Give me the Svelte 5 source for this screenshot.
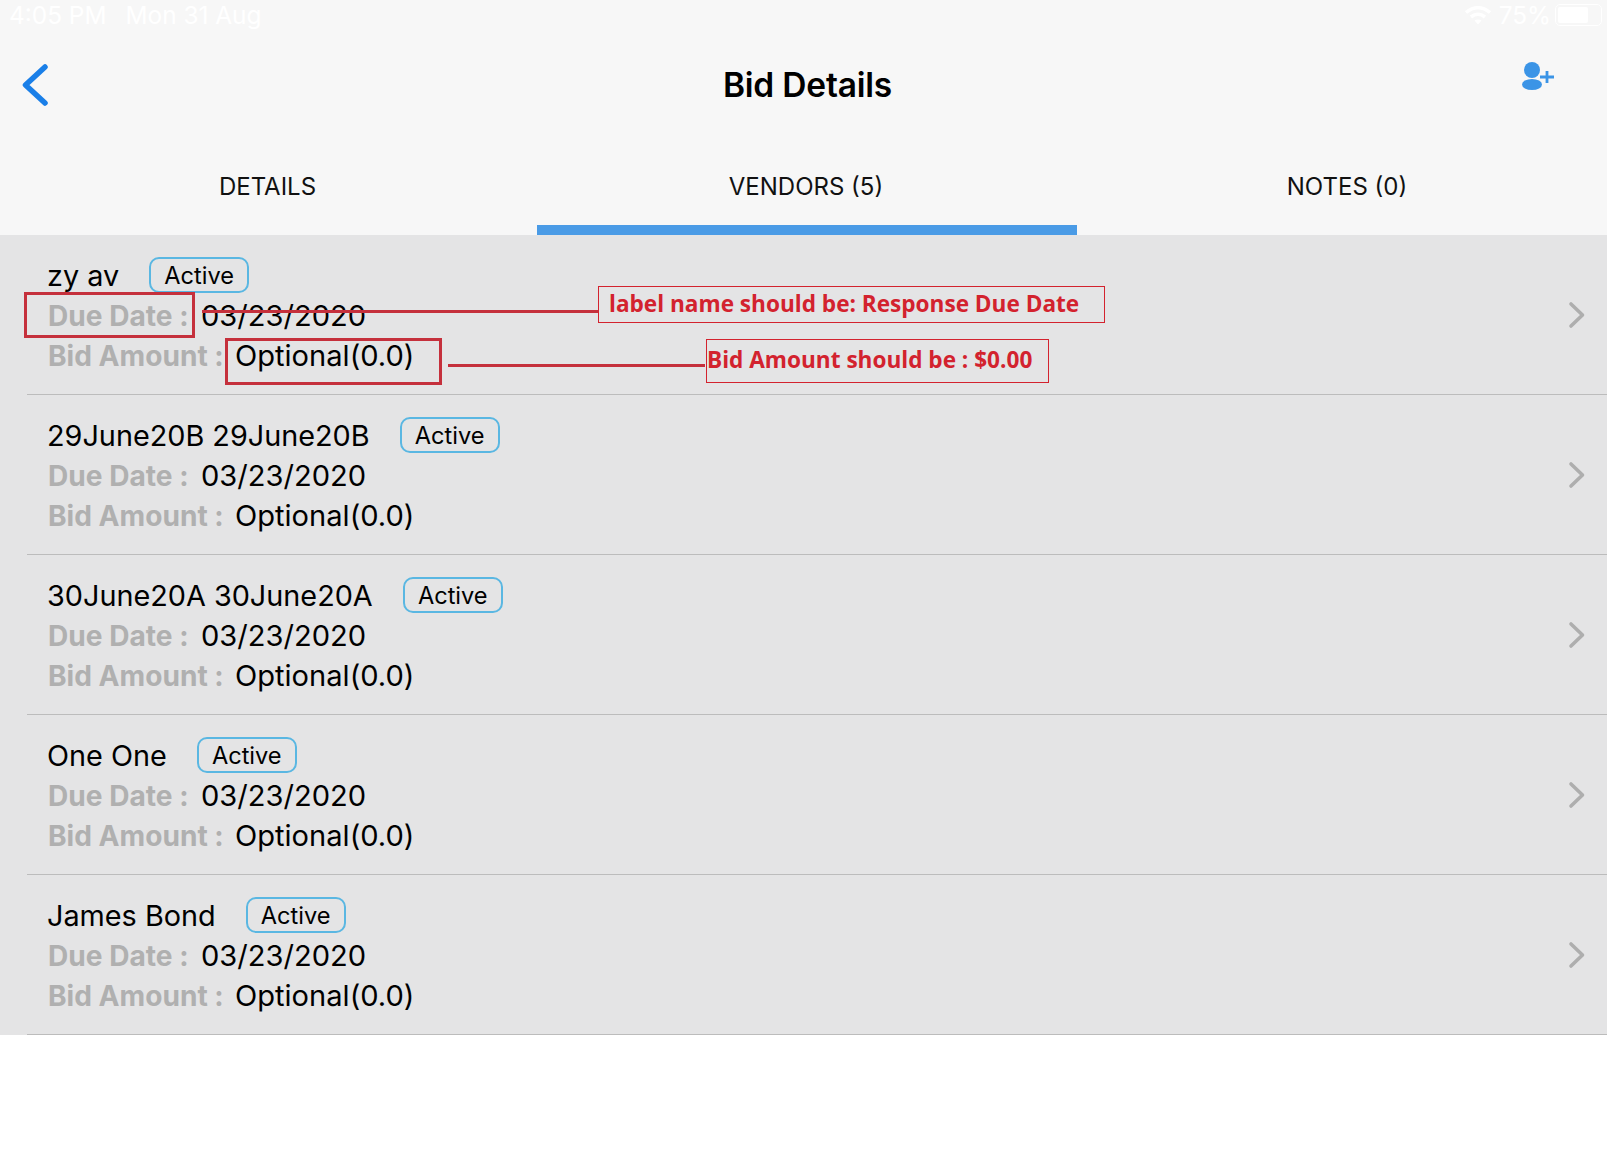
<script lang="ts">
  // Vendor rows for the Bid Details screen
  const vendors = [
    { name: 'zy av', dueDate: '03/23/2020', amount: 'Optional(0.0)' },
    { name: '29June20B 29June20B', dueDate: '03/23/2020', amount: 'Optional(0.0)' },
    { name: '30June20A 30June20A', dueDate: '03/23/2020', amount: 'Optional(0.0)' },
    { name: 'One One', dueDate: '03/23/2020', amount: 'Optional(0.0)' },
    { name: 'James Bond', dueDate: '03/23/2020', amount: 'Optional(0.0)' }
  ];

  const tabs = ['DETAILS', 'VENDORS (5)', 'NOTES (0)'];
  const activeTab = 1;
</script>

<div class="screen">
  <header class="top">
    <div class="status">
      <div class="status-left">
        <span>4:05 PM</span>
        <span>Mon 31 Aug</span>
      </div>
      <div class="status-right">
        <svg width="28" height="20" viewBox="0 0 28 20" aria-hidden="true">
          <path d="M2 7.5C9.5 1 18.5 1 26 7.5" class="wifi" />
          <path d="M7 12C11.500 8.500 16.500 8.500 21 12" class="wifi" />
          <path d="M14 19.500 10.500 15.500C12.500 14 15.500 14 17.500 15.500Z" fill="#fff" />
        </svg>
        <span>75%</span>
        <div class="battery"><div class="battery-fill"></div></div>
      </div>
    </div>

    <nav class="navbar">
      <button type="button" class="icon-btn" aria-label="Back">
        <svg width="28" height="44" viewBox="0 0 28 44">
          <path d="M23 4 3.500 22 23 40" fill="none" stroke="#1a7fe8" stroke-width="5.500" stroke-linecap="round" stroke-linejoin="round" />
        </svg>
      </button>
      <h1>Bid Details</h1>
      <button type="button" class="icon-btn add" aria-label="Add vendor">
        <svg width="34" height="30" viewBox="0 0 34 30">
          <circle cx="11" cy="10" r="8" fill="#3b94e6" />
          <ellipse cx="11" cy="24.500" rx="10" ry="5.500" fill="#3b94e6" />
          <path d="M19 17H33M26 11V23" stroke="#3b94e6" stroke-width="2.800" fill="none" />
        </svg>
      </button>
    </nav>

    <div class="tabs">
      {#each tabs as tab, i}
        <div class="tab" class:active={i === activeTab}>{tab}</div>
      {/each}
    </div>
  </header>

  <main class="list">
    {#each vendors as vendor}
      <div class="row">
        <div class="row-body">
          <div class="line name-line">
            <span class="name">{vendor.name}</span>
            <span class="badge">Active</span>
          </div>
          <div class="line">
            <span class="label due">Due Date :</span>
            <span class="value">{vendor.dueDate}</span>
          </div>
          <div class="line">
            <span class="label bid">Bid Amount :</span>
            <span class="value">{vendor.amount}</span>
          </div>
        </div>
        <svg class="chevron" width="18" height="28" viewBox="0 0 18 28" aria-hidden="true">
          <path d="M3 3 14.500 14 3 25" fill="none" stroke="#aeaeae" stroke-width="3.600" stroke-linecap="round" stroke-linejoin="round" />
        </svg>
      </div>
    {/each}
  </main>

  <!-- review markup drawn over the screenshot -->
  <div class="mark box-due"></div>
  <div class="mark box-amount"></div>
  <div class="mark line-due"></div>
  <div class="mark line-amount"></div>
  <div class="note note-due">label name should be: Response Due Date</div>
  <div class="note note-amount">Bid Amount should be : $0.00</div>
</div>

<style>
  :global(body) {
    background: #fff;
  }

  .screen {
    position: relative;
    width: 1607px;
    height: 1157px;
    overflow: hidden;
    font-family: Inter, "Liberation Sans", sans-serif;
    color: #000;
  }

  .top {
    background: #f7f7f7;
    height: 235px;
    display: flex;
    flex-direction: column;
  }

  .status {
    height: 30px;
    display: flex;
    justify-content: space-between;
    align-items: center;
    color: #fff;
    font-size: 24.400px;
    padding-left: 9px;
  }

  .status-left {
    display: flex;
    gap: 19px;
  }

  .status-right {
    display: flex;
    align-items: center;
    gap: 7px;
    margin-right: 5px;
  }

  .status-right span {
    margin-right: -3px;
  }

  .wifi {
    fill: none;
    stroke: #fff;
    stroke-width: 3.500;
  }

  .battery {
    width: 47px;
    height: 22px;
    border: 1px solid #fff;
    border-radius: 5px;
    padding: 2px;
    box-sizing: border-box;
  }

  .battery-fill {
    width: 72%;
    height: 100%;
    background: #fff;
    border-radius: 2px;
  }

  .navbar {
    height: 110px;
    display: flex;
    align-items: center;
    justify-content: space-between;
    padding: 0 52px 0 22px;
    position: relative;
  }

  .navbar h1 {
    position: absolute;
    left: 8px;
    right: 0;
    top: 0;
    bottom: 0;
    margin: 0;
    display: flex;
    align-items: center;
    justify-content: center;
    font-size: 33.500px;
    font-weight: 600;
    letter-spacing: -0.2px;
  }

  .icon-btn {
    background: none;
    border: none;
    padding: 0;
    display: flex;
    z-index: 1;
  }

  .icon-btn.add {
    margin-bottom: 20px;
  }

  .tabs {
    flex: 1;
    display: grid;
    grid-template-columns: 535px 542px 540px;
  }

  .tab {
    display: flex;
    align-items: center;
    justify-content: center;
    font-size: 24px;
    padding-bottom: 2px;
    color: #111;
  }

  .tab.active {
    box-shadow: inset 0 -10px 0 #4a9be6;
    margin-left: 2px;
    padding-right: 2px;
  }

  .list {
    background: #e4e4e5;
  }

  .row {
    height: 160px;
    box-sizing: border-box;
    margin-left: 27px;
    padding: 20px 21px 0 20px;
    border-bottom: 1px solid #bcbcbc;
    display: flex;
    justify-content: space-between;
    align-items: flex-start;
  }

  .line {
    height: 40px;
    display: flex;
    align-items: center;
    font-size: 29.100px;
  }

  .name-line {
    gap: 30px;
  }

  .name {
    font-size: 28.800px;
  }

  .badge {
    font-size: 23.600px;
    height: 36px;
    width: 100px;
    box-sizing: border-box;
    border: 2px solid #5ab7e2;
    border-radius: 10px;
    display: flex;
    align-items: center;
    justify-content: center;
  }

  .label {
    color: #b0b0b0;
    font-weight: 700;
    font-size: 28.100px;
    padding-left: 1px;
    box-sizing: border-box;
    position: relative;
    top: 1px;
  }

  .label.due {
    width: 154px;
  }

  .label.bid {
    width: 188px;
  }

  .chevron {
    margin-top: 46px;
  }

  .mark {
    position: absolute;
    box-sizing: border-box;
  }

  .box-due {
    left: 24px;
    top: 292px;
    width: 171px;
    height: 46px;
    border: 3px solid #c5303c;
  }

  .box-amount {
    left: 225px;
    top: 338px;
    width: 217px;
    height: 47px;
    border: 3px solid #c5303c;
  }

  .line-due {
    left: 202px;
    top: 310px;
    width: 396px;
    height: 3px;
    background: #c5303c;
  }

  .line-amount {
    left: 448px;
    top: 364px;
    width: 257px;
    height: 3px;
    background: #c5303c;
  }

  .note {
    position: absolute;
    box-sizing: border-box;
    border: 1px solid #d3222e;
    color: #d3222e;
    font-family: "Open Sans", "Noto Sans", sans-serif;
    font-weight: 700;
    font-size: 22.600px;
    display: flex;
    align-items: center;
    white-space: nowrap;
    padding-bottom: 3px;
  }

  .note-due {
    left: 598px;
    top: 286px;
    width: 507px;
    height: 37px;
    padding-left: 10px;
  }

  .note-amount {
    left: 706px;
    top: 339px;
    width: 343px;
    height: 44px;
  }
</style>
